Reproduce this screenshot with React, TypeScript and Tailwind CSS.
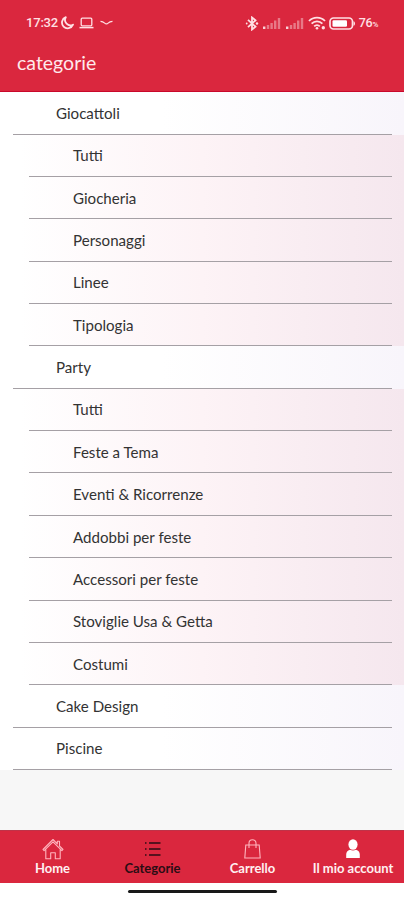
import React from 'react';
import clsx from 'clsx';

type Category = { name: string; child?: boolean };

const categories: Category[] = [
  { name: 'Giocattoli' },
  { name: 'Tutti', child: true },
  { name: 'Giocheria', child: true },
  { name: 'Personaggi', child: true },
  { name: 'Linee', child: true },
  { name: 'Tipologia', child: true },
  { name: 'Party' },
  { name: 'Tutti', child: true },
  { name: 'Feste a Tema', child: true },
  { name: 'Eventi & Ricorrenze', child: true },
  { name: 'Addobbi per feste', child: true },
  { name: 'Accessori per feste', child: true },
  { name: 'Stoviglie Usa & Getta', child: true },
  { name: 'Costumi', child: true },
  { name: 'Cake Design' },
  { name: 'Piscine' },
];

const Signal = () => (
  <svg width="18" height="12" viewBox="0 0 18 12" fill="#fff">
    <path d="M0 9.5h2.4V12H0z" opacity=".8" />
    <path d="M3.8 8h2.4v4H3.8zM7.4 6h2.4v6H7.4zM11 3.5h2.4V12H11zM14.8 1h2.4v11h-2.4z" opacity=".38" />
  </svg>
);

const StatusBar = () => (
  <div className="flex h-[46px] items-center justify-between pl-[26px] pr-[26px] text-[#ffe0e4]">
    <div className="flex items-center">
      <span className="w-[34px] whitespace-nowrap font-[Roboto] text-[13px] font-medium tracking-[-0.2px]">17:32</span>
      <svg width="14" height="14" viewBox="0 0 14 14" fill="none" stroke="currentColor" strokeWidth="1.8">
        <path d="M5.8 1.2A5.7 5.7 0 1 0 13 8.7 5.4 5.4 0 0 1 5.8 1.2Z" strokeLinejoin="round" />
      </svg>
      <svg className="ml-[5px]" width="15" height="12" viewBox="0 0 15 12" fill="none" stroke="currentColor" strokeWidth="1.3">
        <rect x="2.2" y="1.2" width="10.6" height="7.6" rx="1" />
        <path d="M.5 10.6h14" strokeWidth="1.5" />
      </svg>
      <svg className="ml-[6px]" width="13" height="6" viewBox="0 0 13 6" fill="none" stroke="currentColor" strokeWidth="1.2">
        <path d="M.5 1.4c2 0 3 .6 4.2 1.7 1.2 1.1 2.5 1 3.4 0C9.4 1.8 10.5 1.4 12.5 1.4" />
      </svg>
    </div>
    <div className="flex items-center">
      <svg width="14" height="15" viewBox="0 0 14 15" fill="none" stroke="currentColor" strokeWidth="1.8">
        <path d="M3 3.8 10.5 10.7 7 13.5V1.5l3.5 2.8L3 11.2" />
        <circle cx="1.7" cy="7.5" r=".9" fill="currentColor" stroke="none" />
        <circle cx="12" cy="7.5" r="1.2" fill="currentColor" stroke="none" />
      </svg>
      <span className="ml-[4px]"><Signal /></span>
      <span className="ml-[5px]"><Signal /></span>
      <svg className="ml-[4px]" width="18" height="14" viewBox="0 0 18 14" fill="none" stroke="currentColor" strokeWidth="1.8">
        <path d="M1 5C5.3.5 12.7.5 17 5M3.6 7.7c3-3.1 7.8-3.1 10.8 0M6.2 10.3c1.6-1.7 4-1.7 5.6 0" />
        <circle cx="9" cy="12.3" r="1.3" fill="currentColor" stroke="none" />
        <circle cx="15.3" cy="11.8" r="1.7" fill="currentColor" stroke="none" />
      </svg>
      <svg className="ml-[3px]" width="27" height="13" viewBox="0 0 27 13">
        <rect x="1" y="1" width="22.5" height="11" rx="3.5" fill="none" stroke="currentColor" strokeWidth="1.7" />
        <rect x="3.5" y="3.2" width="14.5" height="6.6" rx="1.2" fill="#fff" />
        <path d="M24.5 4.2c2 .6 2 4 0 4.6z" fill="currentColor" />
      </svg>
      <span className="ml-[3px] font-[Roboto] text-[12.5px] font-medium tracking-[-0.3px]">
        76<span className="text-[8px]">%</span>
      </span>
    </div>
  </div>
);

const CategoryRow = ({ name, child }: Category) => (
  <div
    className={clsx(
      'h-[42.35px] bg-linear-to-r pr-[12px]',
      child
        ? 'from-white from-5% via-[#fdf3f6] via-50% to-[#f5e7ee] pl-[29px]'
        : 'from-white from-40% to-[#f8f5fb] pl-[13px]',
    )}
  >
    <div
      className={clsx(
        'flex h-full items-center border-b border-[#a5a0a5] text-[15.1px] leading-5 text-[#333]',
        child ? 'pl-[44px]' : 'pl-[43px]',
      )}
    >
      {name}
    </div>
  </div>
);

const tabs = [
  {
    label: 'Home',
    icon: (
      <svg width="22" height="22" viewBox="0 0 22 22" fill="none" stroke="#ffb5be" strokeWidth="1.1" strokeLinejoin="round">
        <path d="M1 11.5 11 1.5l4.3 4.3V3.2h2.2V8L21 11.5l-1.1 1.2L11 3.8l-8.9 8.9zM3.8 11.4V20.7h4.9v-6h4.6v6h4.9v-9.3" />
      </svg>
    ),
  },
  {
    label: 'Categorie',
    active: true,
    icon: (
      <svg width="17" height="16" viewBox="0 0 17 16" stroke="#2b0d14" strokeWidth="1.5">
        <path d="M1 2h1.5M1 8h1.5M1 14h1.5M5 2h11.5M5 8h11.5M5 14h11.5" />
      </svg>
    ),
  },
  {
    label: 'Carrello',
    icon: (
      <svg width="17" height="20" viewBox="0 0 17 20" fill="none" stroke="#ffb5be" strokeWidth="1.1">
        <path d="M1.8 6h13.4l1 13H.8zM5 9V4.2a3.5 3.5 0 0 1 7 0V9" />
      </svg>
    ),
  },
  {
    label: 'Il mio account',
    icon: (
      <svg width="16" height="20" viewBox="0 0 16 20" fill="#fff">
        <ellipse cx="8" cy="5.5" rx="4.6" ry="5.2" />
        <path d="M1.2 19v-3.500c0-2.300 1.300-4.200 3.800-4.800 1.800 1.100 4.200 1.100 6 0 2.500.6 3.800 2.500 3.800 4.800V19z" />
      </svg>
    ),
  },
];

const App = () => {
  return (
    <div className="flex h-[900px] w-[404px] flex-col overflow-hidden bg-[#f7f7f7] font-[Lato,Carlito,sans-serif]">
      <header className="h-[92px] shrink-0 border-b border-[#c9082b] bg-[#da273e]">
        <StatusBar />
        <h1 className="pl-[17px] pt-[4px] text-[19.5px] leading-[26px] text-[#ffe9ec]">categorie</h1>
      </header>

      <main className="flex-1 pt-[0.4px]">
        {categories.map((category, index) => (
          <CategoryRow key={index} {...category} />
        ))}
      </main>

      <nav className="grid h-[53px] shrink-0 grid-cols-[105px_95px_105px_96px] border-t border-[#bf3348] bg-[#da273e]">
        {tabs.map((tab) => (
          <div key={tab.label} className="flex flex-col items-center pt-[7px]">
            <div className="flex h-[22px] items-center">{tab.icon}</div>
            <span
              className={clsx(
                'whitespace-nowrap text-[13px] font-bold leading-[17px]',
                tab.active ? 'text-[#2b0d14]' : 'text-[#fff0f2]',
              )}
            >
              {tab.label}
            </span>
          </div>
        ))}
      </nav>

      {/* Gesture bar */}
      <div className="flex h-[17px] shrink-0 justify-center bg-white pt-[7px]">
        <div className="h-[3px] w-[149px] rounded-full bg-[#181818]" />
      </div>
    </div>
  );
};

export default App;
